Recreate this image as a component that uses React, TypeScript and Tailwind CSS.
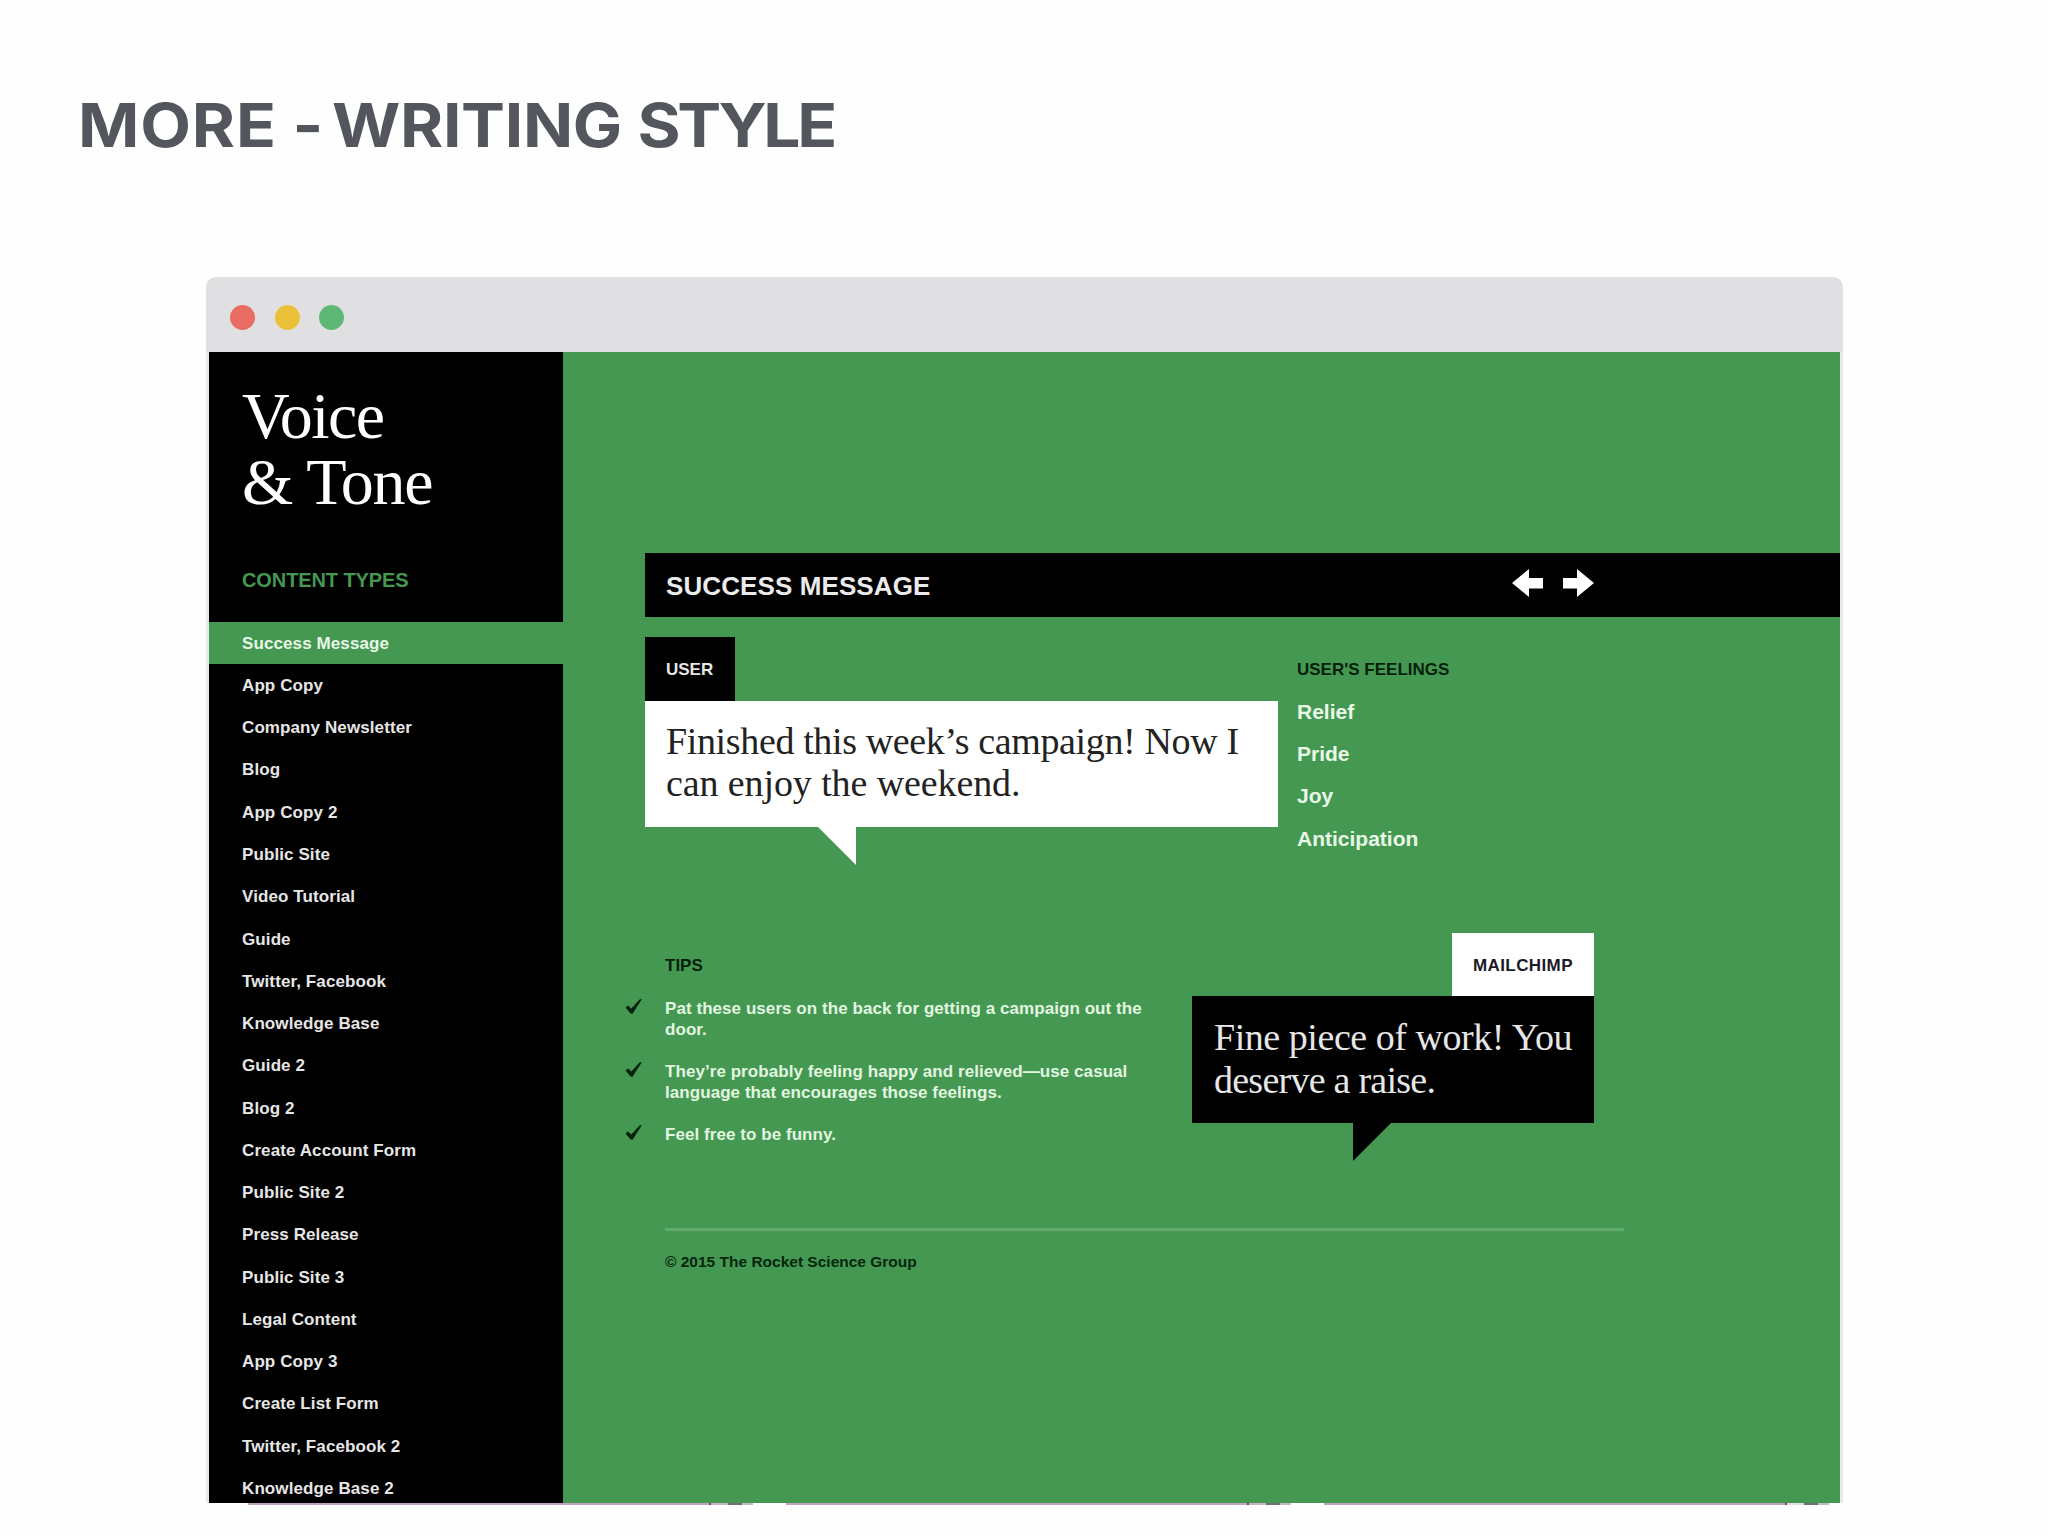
import { clsx } from 'clsx'

const contentTypes = [
  'Success Message',
  'App Copy',
  'Company Newsletter',
  'Blog',
  'App Copy 2',
  'Public Site',
  'Video Tutorial',
  'Guide',
  'Twitter, Facebook',
  'Knowledge Base',
  'Guide 2',
  'Blog 2',
  'Create Account Form',
  'Public Site 2',
  'Press Release',
  'Public Site 3',
  'Legal Content',
  'App Copy 3',
  'Create List Form',
  'Twitter, Facebook 2',
  'Knowledge Base 2',
]

const feelings = ['Relief', 'Pride', 'Joy', 'Anticipation']

const tips = [
  'Pat these users on the back for getting a campaign out the door.',
  'They’re probably feeling happy and relieved—use casual language that encourages those feelings.',
  'Feel free to be funny.',
]

function Sidebar() {
  return (
    <aside className="w-[354px] shrink-0 bg-black overflow-hidden">
      <h2 className="mt-[31px] pl-[33px] font-['Liberation_Serif',serif] text-[66px] leading-[66px] tracking-[-1.5px] text-white">
        <span className="block">Voice</span>
        <span className="block tracking-[-1.2px]">&amp; Tone</span>
      </h2>
      <h3 className="mt-[44px] pl-[33px] text-[20px] leading-[42px] font-bold tracking-[-0.1px] text-[#449852]">CONTENT TYPES</h3>
      <ul className="mt-[20.7px]">
        {contentTypes.map((name, i) => (
          <li
            key={name}
            className={clsx(
              'h-[42.27px] pl-[33px] pt-px text-[17px] leading-[42.25px] font-bold tracking-[0.1px] whitespace-nowrap',
              i === 0 ? 'bg-[#449852] text-[#e8f7e6]' : 'text-[#e6e6e6]'
            )}
          >
            {name}
          </li>
        ))}
      </ul>
    </aside>
  )
}

function Arrow({ flip }: { flip?: boolean }) {
  return (
    <svg className={clsx('w-[31px] h-7', flip && '-scale-x-100')} viewBox="0 0 31 28" fill="#fff">
      <path d="M0 14 L17 0 V9 H31 V19.500 H17 V28 Z" />
    </svg>
  )
}

function UserBubble() {
  return (
    <div className="w-[633px]">
      <div className="w-[90px] h-[63.5px] bg-black pl-[21px] text-[17px] leading-[66px] font-bold text-[#e6e6e6]">USER</div>
      <div className="relative h-[126.5px] bg-white pl-[21px] pt-[19.5px] font-['Liberation_Serif',serif] text-[38px] leading-[42.25px] tracking-[-0.36px] text-[#222] whitespace-nowrap">
        Finished this week’s campaign! Now I
        <br />
        <span className="tracking-[-0.1px]">can enjoy the weekend.</span>
        <svg className="absolute left-[173px] top-[126px] w-[38px] h-[38px]" viewBox="0 0 38 38">
          <path d="M0 0 H38 V38 Z" fill="#fff" />
        </svg>
      </div>
    </div>
  )
}

function MailchimpBubble() {
  return (
    <div className="w-[402px] flex flex-col items-end">
      <div className="w-[142px] h-[63.5px] bg-white pl-[21px] text-[17px] leading-[65px] font-bold tracking-[0.4px] text-[#1c1a26]">MAILCHIMP</div>
      <div className="relative w-full h-[126.5px] bg-black pl-[22px] pt-[20px] font-['Liberation_Serif',serif] text-[38px] leading-[42.25px] tracking-[-0.45px] text-[#e6e6e6] whitespace-nowrap">
        Fine piece of work! You
        <br />
        <span className="tracking-[-0.75px]">deserve a raise.</span>
        <svg className="absolute left-[161px] top-[126px] w-[39px] h-[39px]" viewBox="0 0 39 39">
          <path d="M0 0 H39 L0 39 Z" fill="#000" />
        </svg>
      </div>
    </div>
  )
}

function Tips() {
  return (
    <div className="ml-[-20px] w-[567px] pt-[12px]">
      <h3 className="pl-10 text-[17px] leading-[42.25px] font-bold text-[#041f0a]">TIPS</h3>
      <ul className="mt-[10.5px] flex flex-col gap-[21px]">
        {tips.map(tip => (
          <li key={tip} className="flex">
            <svg className="w-[17px] h-[15px] mt-[1.5px] mr-[23px] shrink-0" viewBox="0 0 17 15">
              <path d="M0.500 8.500 L3 6.500 L6.300 9.500 L14.500 0.500 L17 0 L7.500 14.800 L5.500 14.500 Z" fill="#06210c" />
            </svg>
            <p className="w-[490px] text-[17px] leading-[21.1px] font-bold tracking-[0.06px] text-[#e2f6e0]">{tip}</p>
          </li>
        ))}
      </ul>
    </div>
  )
}

// Sliver of the next page showing under the window
function BottomEdge() {
  return (
    <div className="flex h-[2px] pl-[42px]">
      <div className="w-[461px] bg-[#c3a3bf]" />
      <div className="w-[2px] bg-[#555]" />
      <div className="w-[17px] bg-[#c9b3c6]" />
      <div className="w-[14px] bg-[#6f6f74]" />
      <div className="w-[11px] bg-[#c9b3c6]" />
      <div className="w-[33px] bg-white" />
      <div className="w-[461px] bg-[#c3a3bf]" />
      <div className="w-[2px] bg-[#555]" />
      <div className="w-[17px] bg-[#c9b3c6]" />
      <div className="w-[14px] bg-[#6f6f74]" />
      <div className="w-[11px] bg-[#c9b3c6]" />
      <div className="w-[33px] bg-white" />
      <div className="w-[461px] bg-[#c3a3bf]" />
      <div className="w-[2px] bg-[#555]" />
      <div className="w-[17px] bg-[#e5dce4]" />
      <div className="w-[14px] bg-[#6f6f74]" />
      <div className="w-[11px] bg-[#c9b3c6]" />
    </div>
  )
}

export default function App() {
  return (
    <div className="w-[2048px] h-[1536px] overflow-hidden bg-[#fefefe] font-['Liberation_Sans',Arial,sans-serif]">
      <h1 className="h-[277px] w-[1400px] ml-[78px] pt-[85px] origin-left scale-x-[1.08] font-[Inter,sans-serif] text-[61px] leading-[80px] font-bold [font-feature-settings:'calt'_0] text-[#53565c] whitespace-nowrap">
        <span className="tracking-[0.8px]">MORE</span> <span className="tracking-[-6.5px]">-</span>{' '}
        <span className="tracking-[-0.3px]">WRITING</span> <span className="tracking-[-3.1px]">STYLE</span>
      </h1>

      <div className="ml-[206px] w-[1637px]">
        <div className="h-[75px] rounded-t-[10px] bg-[#e0e0e2] flex items-center gap-[19.5px] pl-[24px] pt-[5px]">
          <span className="size-[25px] rounded-full bg-[#e86c62]" />
          <span className="size-[25px] rounded-full bg-[#ebc039]" />
          <span className="size-[25px] rounded-full bg-[#5cb874]" />
        </div>

        <div className="flex h-[1151px] border-x-3 border-[#e9e9ec]">
          <Sidebar />
          <main className="flex-1 bg-[#449852] pl-[82px]">
            <div className="mt-[201px] h-[63.5px] bg-black flex items-center justify-between pl-[21px] pr-[246px]">
              <h2 className="text-[26px] leading-[30px] font-bold tracking-[0.1px] text-[#ebebeb] pt-[2px]">SUCCESS MESSAGE</h2>
              <div className="flex gap-[20px] pb-[4px]">
                <Arrow />
                <Arrow flip />
              </div>
            </div>

            <div className="mt-[20.5px] flex gap-[19px]">
              <UserBubble />
              <div className="pt-[11.5px] font-bold">
                <h3 className="text-[17px] leading-[42.25px] text-[#041f0a]">USER'S FEELINGS</h3>
                <ul>
                  {feelings.map(feeling => (
                    <li key={feeling} className="text-[21px] leading-[42.25px] text-[#e9f9e7]">
                      {feeling}
                    </li>
                  ))}
                </ul>
              </div>
            </div>

            <div className="mt-[73px] flex">
              <Tips />
              <MailchimpBubble />
            </div>

            <footer className="ml-[20px] mt-[83px] w-[959px] border-t-3 border-[#62ab6d] pt-[20.5px] text-[15.500px] leading-[21px] font-bold text-[#06260d]">
              © 2015 The Rocket Science Group
            </footer>
          </main>
        </div>
        <BottomEdge />
      </div>
    </div>
  )
}
